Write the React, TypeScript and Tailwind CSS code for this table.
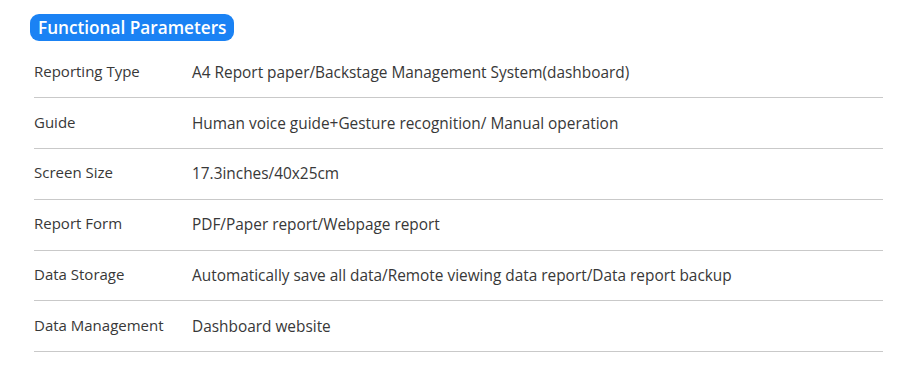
const rows = [
  ["Reporting Type", "A4 Report paper/Backstage Management System(dashboard)"],
  ["Guide", "Human voice guide+Gesture recognition/ Manual operation"],
  ["Screen Size", "17.3inches/40x25cm"],
  ["Report Form", "PDF/Paper report/Webpage report"],
  ["Data Storage", "Automatically save all data/Remote viewing data report/Data report backup"],
  ["Data Management", "Dashboard website"],
];

const App = () => {
  return (
    <div className="w-[922px] h-[374px] bg-white font-['Open_Sans',sans-serif] text-[#383838]">
      <div className="pt-[14px] pl-[30px]">
        <span className="inline-flex items-center h-[27px] px-[8px] rounded-[9px] bg-[#1a82f4] text-white text-[17.2px] font-semibold">
          Functional Parameters
        </span>
      </div>
      <div className="ml-[34px] mr-[39px] mt-[6.5px]">
        {rows.map(([label, value]) => (
          <div key={label} className="flex h-[50.8px] border-b-[1.5px] border-[#c9c9c9] pb-[16.5px] items-end">
            <div className="w-[158px] text-[15px] leading-[20px]">{label}</div>
            <div className="text-[15.4px] leading-[20px] mb-[-2px]">{value}</div>
          </div>
        ))}
      </div>
    </div>
  );
};

export default App;
